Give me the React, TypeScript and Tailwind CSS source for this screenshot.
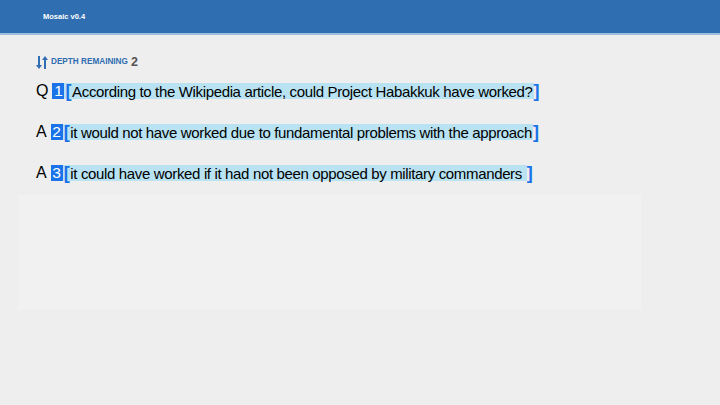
import React from "react";

const rows = [
  { p: "Q", n: "1", t: "According to the Wikipedia article, could Project Habakkuk have worked?" },
  { p: "A", n: "2", t: "it would not have worked due to fundamental problems with the approach" },
  { p: "A", n: "3", t: "it could have worked if it had not been opposed by military commanders\u00a0" },
];

export default function App() {
  return (
    <div className="w-[720px] h-[405px] bg-[#eeeeee] overflow-hidden" style={{ fontFamily: '"Liberation Sans", Arial, sans-serif' }}>
      <div className="h-[35px] bg-[#2f6eb1] border-b-2 border-[#9dbde0] flex items-center pl-[43px]">
        <span className="text-white font-bold text-[7.5px]">Mosaic v0.4</span>
      </div>
      <div className="pl-[36px] pt-[21px] flex items-center gap-[3px]">
        <svg width="12" height="13" viewBox="0 0 12 13" fill="#2f6eb1">
          <rect x="2" y="0" width="2" height="10" />
          <polygon points="0,9 6,9 3,13" />
          <rect x="8" y="3" width="2" height="10" />
          <polygon points="6,4 12,4 9,0" />
        </svg>
        <span className="text-[#2f6eb1] font-bold text-[8.2px]">DEPTH REMAINING</span>
        <span className="text-[#555] font-bold text-[12.5px] leading-none">2</span>
      </div>
      <div className="pl-[36px] pt-[14px] flex flex-col gap-[25px]">
        {rows.map((r) => (
          <div key={r.n} className="flex items-center h-[16px] text-[15px] tracking-[-0.35px] leading-none text-black">
            <span className="mr-[4px] text-[16px] tracking-normal">{r.p}</span>
            <span className="bg-[#1a73e8] text-white h-[16px] w-[12px] justify-center flex items-center text-[15.5px] tracking-normal">{r.n}</span>
            <span className="bg-[#b9e3f3] h-[16px] flex items-center">
              <span className="text-[#1a73e8] font-bold text-[18px] leading-none mx-[1px]">[</span>
              <span>{r.t}</span>
              <span className="text-[#1a73e8] font-bold text-[18px] leading-none ml-[1px] bg-[#eeeeee]">]</span>
            </span>
          </div>
        ))}
      </div>
      <div className="ml-[18px] mt-[14px] w-[623px] h-[115px] bg-[#f1f1f1]" />
    </div>
  );
}
